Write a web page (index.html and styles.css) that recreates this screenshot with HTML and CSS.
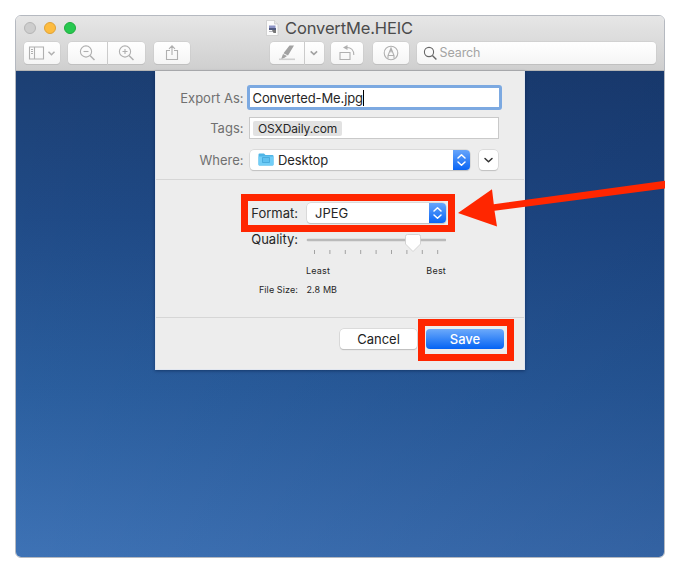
FILE: index.html
```html
<!DOCTYPE html>
<html lang="en">
<head>
<meta charset="utf-8">
<title>ConvertMe.HEIC</title>
<link rel="stylesheet" href="styles.css">
</head>
<body>
<main class="window">
  <header class="chrome">
    <div class="titlebar">
      <div class="lights"><i class="light gray"></i><i class="light amber"></i><i class="light green"></i></div>
      <div class="title">
        <svg width="13" height="16" viewBox="0 0 13 16"><path d="M.5.5h8l3.500 3.500v11.500H.5z" fill="#fbfbfb" stroke="#c6c6c6" stroke-width=".7"/><path d="M8.500.5V4H12" fill="#e5e5e5" stroke="#c6c6c6" stroke-width=".7"/><path d="M3 5.500h6.500v2.500H3z" fill="#8c93c5"/><path d="M3 8h7v2H3z" fill="#505a80"/><path d="M3 11.500h4" stroke="#b7b7bd"/><path d="M6 10h4v3H7.500z" fill="#777"/></svg>
        <span>ConvertMe.HEIC</span>
      </div>
    </div>
    <div class="toolbar">
      <div class="tool sidebar"><svg width="36" height="22" viewBox="0 0 36 22"><path d="M5.500 5h14v12h-14zM10.500 5v12M7 7.500h2M7 9.500h2M7 11.500h2"/><path d="M24.500 9.800l3 3 3-3" stroke-width="1.500"/></svg></div>
      <div class="pair">
        <div class="tool zoom-out"><svg width="39" height="22" viewBox="0 0 39 22"><circle cx="18" cy="9.500" r="5.600"/><path d="M15.500 9.500h5"/><path d="M22 13.500l4.500 4.500" stroke-width="1.500"/></svg></div>
        <div class="tool zoom-in"><svg width="37" height="22" viewBox="0 0 37 22"><circle cx="17" cy="9.500" r="5.600"/><path d="M14.500 9.500h5M17 7v5"/><path d="M21 13.500l4.500 4.500" stroke-width="1.500"/></svg></div>
      </div>
      <div class="tool share"><svg width="36" height="22" viewBox="0 0 36 22"><path d="M16 8.500h-3.500v9h11v-9H20M18 13V4M15 6.800l3-3 3 3"/></svg></div>
      <div class="pair markup">
        <div class="tool marker"><svg width="34" height="22" viewBox="0 0 34 22"><path d="M19.500 3.500h4.500l-6 10-4.500-2.200zM13 12l4 2-2.500 1.800-3.500 1.700z" fill="#a2a2a2" stroke="none"/><path d="M9 17.300h16" stroke="#cfcfcf" stroke-width="1.600"/></svg></div>
        <div class="tool chevron"><svg width="19" height="22" viewBox="0 0 19 22"><path d="M5.700 9.300l3.200 3 3.200-3" stroke-width="1.600" stroke="#a2a2a2"/></svg></div>
      </div>
      <div class="tool rotate"><svg width="32" height="22" viewBox="0 0 32 22"><path d="M9 10.500h10v7H9z"/><path d="M16 5.500c4 0 6.800 2.800 6.800 7.500"/><path d="M16.500 3v5L12 5.500z" fill="#b0b0b0" stroke="none"/></svg></div>
      <div class="tool pen"><svg width="36" height="22" viewBox="0 0 36 22"><circle cx="18" cy="11" r="6.800"/><path d="M15 16.500v-3l3-7.500 3 7.500v3M15 13.500h6M18 6.500v4"/></svg></div>
      <div class="tool search"><svg width="20" height="22" viewBox="0 0 20 22"><circle cx="9" cy="10" r="4.600" stroke="#666"/><path d="M12.400 13.500l4 4" stroke="#666" stroke-width="1.400"/></svg><span>Search</span></div>
    </div>
  </header>
  <div class="canvas">
    <section class="dialog">
      <div class="fields">
        <div class="row name-row"><label>Export As:</label><div class="name-input"><span>Converted-Me.jpg</span><i class="caret"></i></div></div>
        <div class="row tags-row"><label>Tags:</label><div class="tags-input"><span class="tag">OSXDaily.com</span></div></div>
        <div class="row where-row"><label>Where:</label>
          <div class="popup where">
            <svg class="folder" width="16" height="13" viewBox="0 0 16 13"><path d="M.5 1.500q0-1 1-1H6L7.500 2h7q1 0 1 1v8.500q0 1-1 1h-13q-1 0-1-1z" fill="#4fb5e6"/><path d="M.5 3.500h15v8q0 1-1 1h-13q-1 0-1-1z" fill="#72cef7"/><path d="M4.500 4.500h7v5h-7z" fill="#5fc1f0" stroke="#42a5d8" stroke-width=".8"/></svg>
            <span>Desktop</span>
            <b class="stepper"><svg width="17" height="20" viewBox="0 0 17 20"><path d="M5 8l3.500-3.300L12 8M5 12l3.500 3.300L12 12"/></svg></b>
          </div>
          <div class="disclosure"><svg width="19" height="20" viewBox="0 0 19 20"><path d="M6 8.500l3.500 3.300L13 8.500"/></svg></div>
        </div>
      </div>
      <div class="options">
        <div class="format-row"><label>Format:</label>
          <div class="popup format"><span>JPEG</span><b class="stepper"><svg width="17" height="20" viewBox="0 0 17 20"><path d="M5 8l3.500-3.300L12 8M5 12l3.500 3.300L12 12"/></svg></b></div>
        </div>
        <div class="quality-row"><label>Quality:</label>
          <svg width="140" height="24" viewBox="0 0 140 24"><path d="M2 8h137" stroke="#bababa" stroke-width="2.600" stroke-linecap="round"/><path d="M8.500 18v4M23.900 18v4M39.300 18v4M54.700 18v4M70.100 18v4M85.500 18v4M100.900 18v4M116.300 18v4M131.700 18v4" stroke="#a2a2a2"/><path d="M101.500 2.500h11q2 0 2 2V12l-7.500 7.500-7.500-7.500V4.500q0-2 2-2z" fill="#fff" stroke="#cbcbcb" stroke-width=".8"/></svg>
        </div>
        <div class="scale"><span>Least</span><span>Best</span></div>
        <div class="size-row"><label>File Size:</label><span>2.8 MB</span></div>
      </div>
      <footer class="actions">
        <button class="cancel">Cancel</button>
        <div class="save-frame"><button class="save">Save</button></div>
      </footer>
    </section>
  </div>
  <svg class="arrow" width="207" height="50" viewBox="458 180 207 50"><path d="M458 213L492 189.300 493.800 204.300 665 180.700V188.500L494.500 210.800 497 226.500z" fill="#ff2600"/></svg>
</main>
</body>
</html>
```
FILE: styles.css
```css
* { box-sizing: border-box; }
body { margin: 0; background: #fff; font-family: Inter, "Liberation Sans", sans-serif; font-size: 13px; color: #262626; }
svg { display: block; fill: none; flex: none; }
.window { position: relative; width: 650px; height: 543px; margin: 15px 0 0 15px; border: 1px solid #b5b9c0; border-radius: 6px; }
.chrome { height: 55px; background: linear-gradient(#e6e6e6, #cfcfcf); border-bottom: 1px solid #b5b5b5; border-radius: 5px 5px 0 0; }
.titlebar { display: grid; grid-template-columns: 250px 1fr; height: 25.5px; align-items: center; }
.lights { display: flex; gap: 8px; padding-left: 8px; margin-top: -2px; }
.light { width: 12px; height: 12px; border-radius: 50%; border: .5px solid #b5b5b5; background: #cdcdcd; }
.amber { background: #fdbc40; border-color: #dfa236; }
.green { background: #27c850; border-color: #1eac3d; }
.title { display: flex; gap: 6px; align-items: center; margin-top: -2px; font-size: 16.5px; letter-spacing: -.13px; color: #4b4b4b; }
.toolbar { display: flex; height: 22px; padding-left: 8px; }
.tool { display: flex; height: 22px; border-radius: 4px; background: linear-gradient(#fff, #f5f5f5); box-shadow: 0 0 0 .5px #c8c8c8, 0 1px 0 #b8b8b8; }
.tool svg { stroke: #b0b0b0; stroke-width: 1.1; }
.pair { display: flex; gap: 1px; margin: 0 8.500px 0 8px; }
.pair .tool:first-child { border-radius: 4px 0 0 4px; }
.pair .tool:last-child { border-radius: 0 4px 4px 0; }
.markup { margin: 0 7.500px 0 80px; }
.pen { margin: 0 8px 0 9.500px; }
.search { width: 239.500px; padding-left: 3px; align-items: center; color: #a4a4a4; font-size: 12.500px; letter-spacing: -.1px; gap: 0; }
.canvas { height: 486px; background: linear-gradient(97deg, transparent 0%, rgba(0, 20, 70, .18) 100%), linear-gradient(#1c3f73, #204b87 30%, #2b5f9f 65%, #3f74b7); border-radius: 0 0 5px 5px; }
.dialog { width: 370px; height: 299px; margin-left: 139px; background: #ededed; border: 1px solid #e1e6ef; border-top: 0; box-shadow: 0 1px 3px rgba(0, 20, 55, .45); }
.fields { height: 109px; border-bottom: 1px solid #d6d6d6; padding-top: 14px; }
.row { display: flex; align-items: center; }
.row label { width: 87.500px; text-align: right; color: #707070; }
.name-row { height: 25px; }
.name-input { display: flex; align-items: center; width: 255px; height: 25px; margin-left: 3px; padding-left: 3px; border: 3px solid #7ca9e1; border-radius: 3px; background: #fff; letter-spacing: -.12px; }
.caret { width: 1px; height: 16px; background: #000; }
.tags-row { height: 22px; margin-top: 7px; }
.tags-input { display: flex; align-items: center; width: 250px; height: 22px; margin-left: 5.500px; padding-left: 3px; border: 1px solid #c9c9c9; background: #fff; }
.tag { height: 15px; line-height: 15px; padding: 0 5px; border-radius: 2px; background: #e2e2e2; font-size: 12px; letter-spacing: -.1px; }
.where-row { height: 20px; margin-top: 10.500px; }
.popup { display: flex; align-items: center; height: 20px; border-radius: 4px; background: #fff; box-shadow: 0 0 0 .5px #cacaca, 0 1px 1px rgba(0, 0, 0, .22); overflow: hidden; }
.where { width: 220px; margin-left: 6px; padding-left: 8px; letter-spacing: -.1px; }
.folder { margin-right: 4.500px; }
.stepper { margin-left: auto; width: 17px; height: 20px; background: linear-gradient(#66a5fb, #0965f5); }
.stepper svg { stroke: #fff; stroke-width: 1.500; stroke-linecap: round; stroke-linejoin: round; }
.disclosure { width: 19px; height: 20px; margin-left: 9.500px; border-radius: 4px; background: #fff; box-shadow: 0 0 0 .5px #cacaca, 0 1px 1px rgba(0, 0, 0, .22); }
.disclosure svg { stroke: #333; stroke-width: 1.500; stroke-linecap: round; stroke-linejoin: round; }
.options { height: 138px; padding: 14px 0 0 85px; border-bottom: 1px solid #d6d6d6; }
.format-row { display: flex; align-items: center; width: 214px; height: 38px; border: 7px solid #ff2600; }
.format-row label { width: 50px; text-align: right; }
.format { width: 139.500px; margin-left: 8.500px; padding-left: 8.500px; height: 19.500px; }
.quality-row { display: flex; height: 26px; }
.quality-row label { width: 57px; text-align: right; line-height: 15px; margin-right: 8px; }
.scale { display: flex; justify-content: space-between; width: 140px; margin: 6px 0 0 65px; font-size: 9px; line-height: 14px; letter-spacing: .2px; }
.size-row { display: flex; gap: 8.500px; margin-top: 5px; font-size: 9px; line-height: 14px; letter-spacing: .1px; }
.size-row label { width: 57px; text-align: right; white-space: nowrap; }
.actions { display: flex; padding: .5px 10px 0 0; justify-content: flex-end; }
.cancel, .save { font: inherit; height: 20px; padding: 0; border: 0; border-radius: 4px; }
.cancel { width: 77px; margin: 10px 1px 0 0; color: #222; background: #fff; box-shadow: 0 0 0 .5px #c9c9c9, 0 1px 1px rgba(0, 0, 0, .25); }
.save-frame { width: 96px; height: 42px; border: 7px solid #ff2600; padding: 3px 1px; }
.save { display: block; width: 78px; color: #fff; font-weight: 500; background: linear-gradient(#6caafb, #0463f4); }
.arrow { position: absolute; left: 442px; top: 164px; }
```
